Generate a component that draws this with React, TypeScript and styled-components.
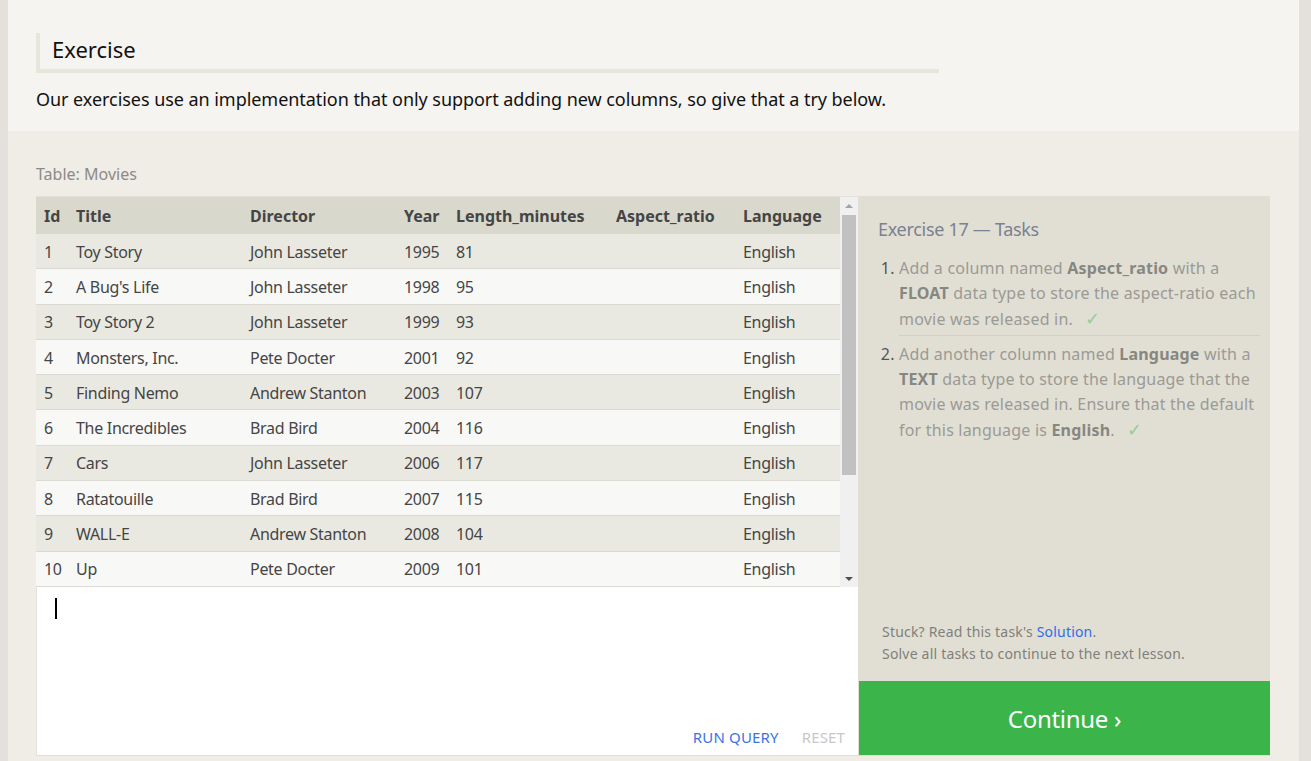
import React from "react";
import styled, { createGlobalStyle } from "styled-components";

const FONT = `"Noto Sans", "Open Sans", "Liberation Sans", sans-serif`;

const Global = createGlobalStyle`
  html, body { margin: 0; padding: 0; }
  body { background: #e4e0dc; font-family: ${FONT}; }
`;

const Page = styled.div`
  margin: 0 12px 0 8px;
  height: 761px;
  display: flex;
  flex-direction: column;
  overflow: hidden;
`;

const Intro = styled.section`
  background: #f5f4f0;
  padding: 33px 28px 0;
  height: 131px;
  box-sizing: border-box;
`;

const Heading = styled.h2`
  margin: 0;
  width: 903px;
  height: 40px;
  box-sizing: border-box;
  border-left: 4px solid #e6e6da;
  border-bottom: 4px solid #e6e6da;
  padding-left: 12px;
  font-weight: 400;
  font-size: 22px;
  line-height: 33px;
  color: #111;
`;

const Lead = styled.p`
  margin: 13px 0 0;
  font-size: 18px;
  line-height: 26px;
  color: #111;
  letter-spacing: -0.05px;
`;

const Exercise = styled.section`
  flex: 1;
  background: #efede5;
  padding: 32px 29px 0 28px;
`;

const TableLabel = styled.div`
  font-size: 16px;
  line-height: 22px;
  color: #8c8a86;
  margin-bottom: 11px;
`;

const Workspace = styled.div`
  display: grid;
  grid-template-columns: 822px 412px;
  height: 560px;
`;

const LeftColumn = styled.div`
  display: flex;
  flex-direction: column;
`;

const TableFrame = styled.div`
  display: flex;
  height: 391px;
  border-top: 1px solid #e3e1d9;
  box-sizing: border-box;
`;

const TableScroll = styled.div`
  width: 804px;
  overflow: hidden;
`;

const Table = styled.table`
  border-collapse: collapse;
  table-layout: fixed;
  width: 804px;
  font-size: 16px;
  color: #454545;
`;

const HeadCell = styled.th<{ $w: number }>`
  width: ${(p) => p.$w}px;
  height: 37px;
  padding: 0 8px;
  box-sizing: border-box;
  background: #d9d8cc;
  text-align: left;
  font-weight: 700;
  color: #454545;
  white-space: nowrap;
`;

const Row = styled.tr<{ $odd: boolean }>`
  background: ${(p) => (p.$odd ? "#eae9e1" : "#f8f8f7")};
  border-bottom: 1px solid #dcdbd3;
`;

const Cell = styled.td`
  height: 33.3px;
  padding: 1px 8px 0;
  white-space: nowrap;
  letter-spacing: -0.3px;
`;

const Scrollbar = styled.div`
  width: 18px;
  background: #f0f0f0;
  display: flex;
  flex-direction: column;
  align-items: center;
`;

const ArrowBox = styled.div`
  height: 17px;
  width: 100%;
  display: flex;
  align-items: center;
  justify-content: center;
`;

const Arrow = styled.div<{ $down?: boolean }>`
  width: 0;
  height: 0;
  border-left: 4px solid transparent;
  border-right: 4px solid transparent;
  ${(p) =>
    p.$down
      ? "border-top: 4px solid #505050;"
      : "border-bottom: 4px solid #a3a3a3;"}
`;

const Track = styled.div`
  flex: 1;
  width: 100%;
  display: flex;
  justify-content: center;
`;

const Thumb = styled.div`
  width: 14px;
  height: 260px;
  margin-top: 1px;
  background: #c1c1c1;
`;

const Editor = styled.div`
  flex: 1;
  background: #fff;
  border-left: 1px solid #e4e2da;
  border-bottom: 1px solid #e0ded6;
  display: flex;
  flex-direction: column;
  justify-content: space-between;
  padding: 11px 13px 8px 18px;
`;

const Caret = styled.div`
  width: 2px;
  height: 21px;
  background: #000;
`;

const EditorActions = styled.div`
  display: flex;
  justify-content: flex-end;
  gap: 23px;
`;

const ActionButton = styled.span<{ $muted?: boolean }>`
  font-size: 15px;
  line-height: 20px;
  letter-spacing: 0.15px;
  color: ${(p) => (p.$muted ? "#c8c8c8" : "#3b73e6")};
`;

const TaskPanel = styled.aside`
  background: #e1dfd4;
  display: flex;
  flex-direction: column;
`;

const TaskBody = styled.div`
  flex: 1;
  display: flex;
  flex-direction: column;
  padding: 20px 10px 0 20px;
`;

const TaskTitle = styled.h3`
  margin: 0;
  font-size: 18px;
  line-height: 26px;
  font-weight: 400;
  color: #7a8190;
  letter-spacing: -0.3px;
`;

const TaskList = styled.ol`
  margin: 14px 0 0;
  padding-left: 21px;
`;

const Task = styled.li`
  font-size: 16px;
  line-height: 25px;
  color: #9b9a94;
  letter-spacing: 0.2px;
  padding-bottom: 3px;
  &::marker { color: #555; }
  & + & { margin-top: 6px; }
  &:not(:last-child) { border-bottom: 1px solid #d3d1c6; }
`;

const Line = styled.span`
  display: block;
  white-space: nowrap;
`;

const Strong = styled.strong`
  color: #878782;
`;

const Check = styled.span`
  color: #8fd09a;
  margin-left: 12px;
  font-family: "DejaVu Sans", sans-serif;
  font-size: 18px;
  font-weight: 300;
`;

const Hint = styled.div`
  margin-top: auto;
  padding: 0 0 16px 4px;
  font-size: 14px;
  line-height: 22px;
  color: #807f7a;
  letter-spacing: 0.2px;
`;

const Link = styled.a`
  color: #2d6ee8;
  text-decoration: none;
`;

const ContinueButton = styled.button`
  height: 74px;
  border: 0;
  margin: 0 0 1px 1px;
  background: #3bb54a;
  color: #fff;
  font-family: ${FONT};
  font-size: 24px;
  letter-spacing: -0.3px;
  cursor: pointer;
`;

const columns = [
  { name: "Id", w: 32 },
  { name: "Title", w: 174 },
  { name: "Director", w: 154 },
  { name: "Year", w: 52 },
  { name: "Length_minutes", w: 160 },
  { name: "Aspect_ratio", w: 127 },
  { name: "Language", w: 105 },
];

const movies: [number, string, string, number, number][] = [
  [1, "Toy Story", "John Lasseter", 1995, 81],
  [2, "A Bug's Life", "John Lasseter", 1998, 95],
  [3, "Toy Story 2", "John Lasseter", 1999, 93],
  [4, "Monsters, Inc.", "Pete Docter", 2001, 92],
  [5, "Finding Nemo", "Andrew Stanton", 2003, 107],
  [6, "The Incredibles", "Brad Bird", 2004, 116],
  [7, "Cars", "John Lasseter", 2006, 117],
  [8, "Ratatouille", "Brad Bird", 2007, 115],
  [9, "WALL-E", "Andrew Stanton", 2008, 104],
  [10, "Up", "Pete Docter", 2009, 101],
];

export default function App() {
  return (
    <>
      <Global />
      <Page>
        <Intro>
          <Heading>Exercise</Heading>
          <Lead>
            Our exercises use an implementation that only support adding new
            columns, so give that a try below.
          </Lead>
        </Intro>
        <Exercise>
          <TableLabel>Table: Movies</TableLabel>
          <Workspace>
            <LeftColumn>
              <TableFrame>
                <TableScroll>
                  <Table>
                    <thead>
                      <tr>
                        {columns.map((c) => (
                          <HeadCell key={c.name} $w={c.w}>
                            {c.name}
                          </HeadCell>
                        ))}
                      </tr>
                    </thead>
                    <tbody>
                      {movies.map(([id, title, director, year, len], i) => (
                        <Row key={id} $odd={i % 2 === 0}>
                          <Cell>{id}</Cell>
                          <Cell>{title}</Cell>
                          <Cell>{director}</Cell>
                          <Cell>{year}</Cell>
                          <Cell>{len}</Cell>
                          <Cell></Cell>
                          <Cell>English</Cell>
                        </Row>
                      ))}
                    </tbody>
                  </Table>
                </TableScroll>
                <Scrollbar>
                  <ArrowBox>
                    <Arrow />
                  </ArrowBox>
                  <Track>
                    <Thumb />
                  </Track>
                  <ArrowBox>
                    <Arrow $down />
                  </ArrowBox>
                </Scrollbar>
              </TableFrame>
              <Editor>
                <Caret />
                <EditorActions>
                  <ActionButton>RUN QUERY</ActionButton>
                  <ActionButton $muted>RESET</ActionButton>
                </EditorActions>
              </Editor>
            </LeftColumn>
            <TaskPanel>
              <TaskBody>
                <TaskTitle>Exercise 17 — Tasks</TaskTitle>
                <TaskList>
                  <Task>
                    <Line>
                      Add a column named <Strong>Aspect_ratio</Strong> with a
                    </Line>
                    <Line>
                      <Strong>FLOAT</Strong> data type to store the aspect-ratio each
                    </Line>
                    <Line>
                      movie was released in.<Check>✓</Check>
                    </Line>
                  </Task>
                  <Task>
                    <Line>
                      Add another column named <Strong>Language</Strong> with a
                    </Line>
                    <Line>
                      <Strong>TEXT</Strong> data type to store the language that the
                    </Line>
                    <Line>
                      movie was released in. Ensure that the default
                    </Line>
                    <Line>
                      for this language is <Strong>English</Strong>.<Check>✓</Check>
                    </Line>
                  </Task>
                </TaskList>
                <Hint>
                  Stuck? Read this task's <Link href="#">Solution</Link>.
                  <br />
                  Solve all tasks to continue to the next lesson.
                </Hint>
              </TaskBody>
              <ContinueButton>Continue ›</ContinueButton>
            </TaskPanel>
          </Workspace>
        </Exercise>
      </Page>
    </>
  );
}
